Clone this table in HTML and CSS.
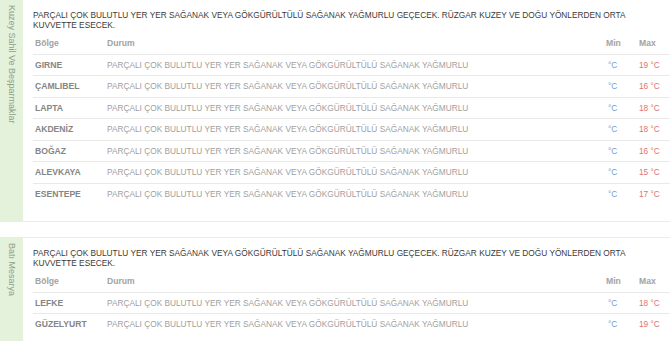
FILE: index.html
```html
<!DOCTYPE html>
<html lang="tr">
<head>
<meta charset="utf-8">
<link rel="stylesheet" href="styles.css">
</head>
<body>
<section class="block block-first">
  <div class="side"><span class="side-label">Kuzey Sahil Ve Beşparmaklar</span></div>
  <div class="content">
    <p class="summary">PARÇALI ÇOK BULUTLU YER YER SAĞANAK VEYA GÖKGÜRÜLTÜLÜ SAĞANAK YAĞMURLU GEÇECEK. RÜZGAR KUZEY VE DOĞU YÖNLERDEN ORTA KUVVETTE ESECEK.</p>
    <div class="table">
      <div class="row head"><span>Bölge</span><span>Durum</span><span>Min</span><span>Max</span></div>
      <div class="row"><span class="name">GIRNE</span><span class="desc">PARÇALI ÇOK BULUTLU YER YER SAĞANAK VEYA GÖKGÜRÜLTÜLÜ SAĞANAK YAĞMURLU</span><span class="min">°C</span><span class="max">19 °C</span></div>
      <div class="row"><span class="name">ÇAMLIBEL</span><span class="desc">PARÇALI ÇOK BULUTLU YER YER SAĞANAK VEYA GÖKGÜRÜLTÜLÜ SAĞANAK YAĞMURLU</span><span class="min">°C</span><span class="max">16 °C</span></div>
      <div class="row"><span class="name">LAPTA</span><span class="desc">PARÇALI ÇOK BULUTLU YER YER SAĞANAK VEYA GÖKGÜRÜLTÜLÜ SAĞANAK YAĞMURLU</span><span class="min">°C</span><span class="max">18 °C</span></div>
      <div class="row"><span class="name">AKDENİZ</span><span class="desc">PARÇALI ÇOK BULUTLU YER YER SAĞANAK VEYA GÖKGÜRÜLTÜLÜ SAĞANAK YAĞMURLU</span><span class="min">°C</span><span class="max">18 °C</span></div>
      <div class="row"><span class="name">BOĞAZ</span><span class="desc">PARÇALI ÇOK BULUTLU YER YER SAĞANAK VEYA GÖKGÜRÜLTÜLÜ SAĞANAK YAĞMURLU</span><span class="min">°C</span><span class="max">16 °C</span></div>
      <div class="row"><span class="name">ALEVKAYA</span><span class="desc">PARÇALI ÇOK BULUTLU YER YER SAĞANAK VEYA GÖKGÜRÜLTÜLÜ SAĞANAK YAĞMURLU</span><span class="min">°C</span><span class="max">15 °C</span></div>
      <div class="row"><span class="name">ESENTEPE</span><span class="desc">PARÇALI ÇOK BULUTLU YER YER SAĞANAK VEYA GÖKGÜRÜLTÜLÜ SAĞANAK YAĞMURLU</span><span class="min">°C</span><span class="max">17 °C</span></div>
    </div>
  </div>
</section>
<section class="block">
  <div class="side"><span class="side-label">Batı Mesarya</span></div>
  <div class="content">
    <p class="summary">PARÇALI ÇOK BULUTLU YER YER SAĞANAK VEYA GÖKGÜRÜLTÜLÜ SAĞANAK YAĞMURLU GEÇECEK. RÜZGAR KUZEY VE DOĞU YÖNLERDEN ORTA KUVVETTE ESECEK.</p>
    <div class="table">
      <div class="row head"><span>Bölge</span><span>Durum</span><span>Min</span><span>Max</span></div>
      <div class="row"><span class="name">LEFKE</span><span class="desc">PARÇALI ÇOK BULUTLU YER YER SAĞANAK VEYA GÖKGÜRÜLTÜLÜ SAĞANAK YAĞMURLU</span><span class="min">°C</span><span class="max">18 °C</span></div>
      <div class="row"><span class="name">GÜZELYURT</span><span class="desc">PARÇALI ÇOK BULUTLU YER YER SAĞANAK VEYA GÖKGÜRÜLTÜLÜ SAĞANAK YAĞMURLU</span><span class="min">°C</span><span class="max">19 °C</span></div>
    </div>
  </div>
</section>
</body>
</html>
```

FILE: styles.css
```css
html, body {
  margin: 0;
  padding: 0;
  background: #ffffff;
}
body {
  font-family: "Liberation Sans", Arial, sans-serif;
  width: 670px;
  overflow: hidden;
}
.block {
  display: flex;
  border-top: 1px solid #e8eee0;
  border-bottom: 1px solid #e8eee0;
  margin-bottom: 15px;
}
.block-first {
  margin-top: -1px;
}
.side {
  width: 23px;
  flex: none;
  background: #e4f1db;
  display: flex;
  justify-content: center;
  padding-top: 5px;
  box-sizing: border-box;
}
.side-label {
  writing-mode: vertical-rl;
  font-size: 9px;
  line-height: 11px;
  color: #8ea087;
  white-space: nowrap;
}
.content {
  flex: 1;
  padding: 10px 0 17px 10px;
  min-width: 0;
}
.summary {
  margin: 0 0 2px 0;
  font-size: 8.3px;
  line-height: 10px;
  color: #3a3a3a;
  padding-right: 0;
}
.table {
  display: flex;
  flex-direction: column;
}
.row {
  display: grid;
  grid-template-columns: 72px 1fr 33px 33px;
  align-items: center;
  height: 21.5px;
  box-sizing: border-box;
  border-top: 1px solid #e9e9e9;
}
.row > span {
  padding-left: 2px;
  white-space: nowrap;
}
.row.head {
  border-top: none;
}
.row.head span {
  font-size: 8.6px;
  font-weight: bold;
  color: #a3a3a3;
}
.name {
  font-size: 8.6px;
  font-weight: bold;
  color: #858585;
}
.desc {
  font-size: 8.3px;
  color: #a0a0a0;
}
.min {
  font-size: 8.3px;
  color: #6f9fd0;
  padding-left: 4px !important;
}
.max {
  font-size: 8.3px;
  color: #e07272;
}
```
